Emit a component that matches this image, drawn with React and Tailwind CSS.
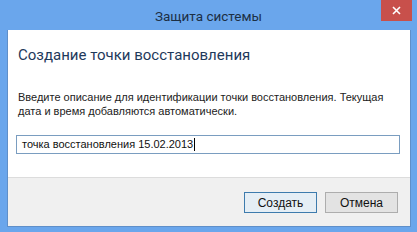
import React from 'react';

export default function App() {
  return (
    <div className="w-[417px] h-[232px] bg-[#6aa6ec] flex flex-col overflow-hidden" style={{ fontFamily: 'Roboto, "Noto Sans", sans-serif' }}>
      {/* Title bar */}
      <div className="relative h-[30px] flex items-center justify-center shrink-0">
        <span className="text-[13.5px] text-[#1c2f44] mt-[2px]">Защита системы</span>
        <div className="absolute top-0 right-[5px] w-[31px] h-[21px] bg-[#c8504b] flex items-center justify-center">
          <svg width="9" height="9" viewBox="0 0 9 9">
            <path d="M1 1 L8 8 M8 1 L1 8" stroke="#fff" strokeWidth="1.6" />
          </svg>
        </div>
      </div>

      {/* Client area */}
      <div className="ml-[7px] mr-[6px] flex flex-col border border-[#5f8fc9] border-t-0">
        <div className="bg-white h-[147px] flex flex-col">
          <div className="pl-[10px] pt-[15px] text-[15px] text-[#1e395b] leading-[20px]">Создание точки восстановления</div>
          <div className="pl-[10px] pr-[8px] pt-[25px] text-[11px] leading-[14px] text-[#222]" style={{ fontFamily: '"Liberation Sans", Arial, sans-serif' }}>
            Введите описание для идентификации точки восстановления. Текущая дата и время добавляются автоматически.
          </div>
          <div className="ml-[8px] mr-[10px] mt-[17px] h-[19px] border border-[#7a9dc0] flex items-center pl-[5px]" style={{ fontFamily: '"Liberation Sans", Arial, sans-serif' }}>
            <span className="text-[11px] text-[#111]">точка восстановления 15.02.2013</span>
            <span className="w-px h-[13px] bg-black ml-[1px]" />
          </div>
        </div>
        <div className="h-px bg-[#dcdcdc]" />
        <div className="bg-[#f0f0f0] h-[48px] flex items-start justify-end gap-[8px] pt-[14px] pr-[12px]" style={{ fontFamily: '"Liberation Sans", Arial, sans-serif' }}>
          <div className="w-[73px] h-[21px] border border-[#3d7bad] bg-[#e5eef5] flex items-center justify-center text-[12px] text-[#111]">Создать</div>
          <div className="w-[73px] h-[21px] border border-[#adadad] bg-[#e3e3e3] flex items-center justify-center text-[12px] text-[#111]">Отмена</div>
        </div>
      </div>
    </div>
  );
}
